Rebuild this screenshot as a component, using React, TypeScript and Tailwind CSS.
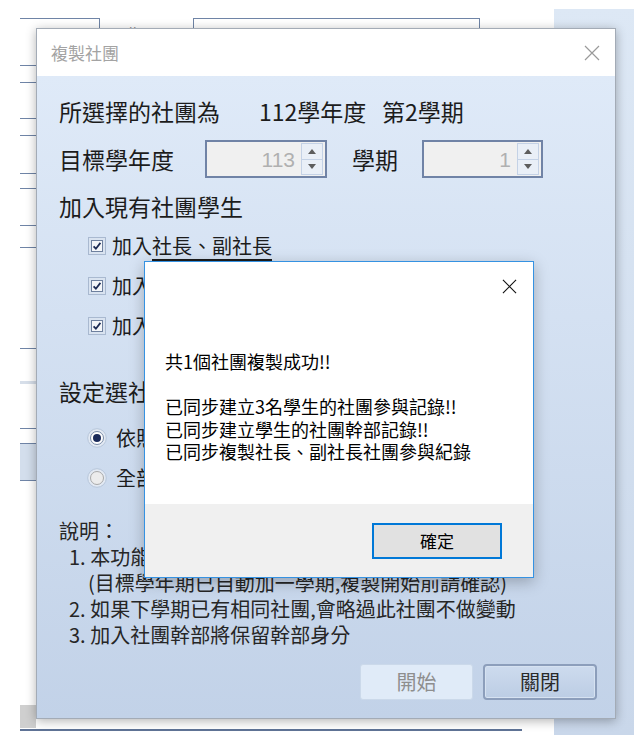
import React from "react";

const font = "font-['Noto_Sans_CJK_TC','Noto_Sans_CJK_SC',sans-serif]";

const CheckBox = () => (
  <svg width="18" height="18" viewBox="0 0 18 18">
    <rect x="0.5" y="0.5" width="17" height="17" fill="#d9e3f0" stroke="#a9b9d0" />
    <rect x="3.5" y="3.5" width="11" height="11" fill="#f5f7fa" stroke="#6e809e" />
    <path d="M5.6 9.3 L7.9 11.7 L12.4 5.9" fill="none" stroke="#1d2c55" strokeWidth="1.8" />
  </svg>
);

const Radio = ({ on }: { on?: boolean }) => (
  <svg width="20" height="20" viewBox="0 0 20 20">
    <circle cx="10" cy="10" r="9.3" fill="#e2e9f3" stroke="#b7c6da" />
    <circle cx="10" cy="10" r="6.5" fill={on ? "#ffffff" : "#ececec"} stroke={on ? "#7a8ca8" : "#a9a9a9"} />
    {on && <circle cx="10" cy="10" r="4" fill="#1b2b5a" />}
  </svg>
);

const CloseX = ({ color, size }: { color: string; size: number }) => (
  <svg width={size} height={size} viewBox="0 0 16 16">
    <path d="M1 1 L15 15 M15 1 L1 15" stroke={color} strokeWidth="1.2" fill="none" />
  </svg>
);

const Spin = ({ value, width }: { value: string; width: string }) => (
  <div className={`${width} h-[38px] flex items-center border-2 border-[#7083a6] bg-[#f0f0f0] pr-[2px]`}>
    <div className="flex-1 pr-[6px] text-right text-[21px] leading-none text-[#b0b0b0] font-['Liberation_Sans',sans-serif]">
      {value}
    </div>
    <div className="w-[22px] h-[32px] flex flex-col">
      <div className="flex-1 flex items-center justify-center border border-[#c4d2e6] bg-[#e9eff7]">
        <svg width="8" height="5" viewBox="0 0 8 5"><path d="M0 5 L4 0 L8 5 Z" fill="#5d5d5d" /></svg>
      </div>
      <div className="flex-1 flex items-center justify-center border border-t-0 border-[#c4d2e6] bg-[#e9eff7]">
        <svg width="8" height="5" viewBox="0 0 8 5"><path d="M0 0 L4 5 L8 0 Z" fill="#5d5d5d" /></svg>
      </div>
    </div>
  </div>
);

const Line = ({ mt, light }: { mt: string; light?: boolean }) => (
  <div className={`${mt} w-[16px] ${light ? "h-[3px] bg-[#d6dee9]" : "h-px bg-[#6f84a6]"}`} />
);

export default function App() {
  return (
    <div className={`relative w-[634px] h-[745px] overflow-hidden bg-white ${font}`}>
      {/* application behind the dialog */}
      <div className="flex h-full">
        <div className="w-[554px] flex flex-col">
          <div className="flex pt-[18px]">
            <div className="ml-[20px] w-[80px] h-[14px] border-t border-r border-[#6f84a6]" />
            <span className="ml-[28px] mt-[8px] text-[16px] leading-none text-[#8a8a8a]">期</span>
            <div className="ml-[49px] w-[287px] h-[14px] border-t border-l border-r border-[#6f84a6] pl-[8px] pt-[7px] text-[18px] leading-none text-[#333]">
              112
            </div>
          </div>
          <div className="ml-[20px] flex flex-col">
            <Line mt="mt-[23px]" />
            <Line mt="mt-[16px]" />
            <Line mt="mt-[35px]" />
            <Line mt="mt-[16px]" />
            <Line mt="mt-[37px]" />
            <Line mt="mt-[14px]" />
            <Line mt="mt-[36px]" />
            <Line mt="mt-[21px]" />
            <Line mt="mt-[100px]" />
            <Line mt="mt-[32px]" light />
            <Line mt="mt-[44px]" />
            <div className="mt-[14px] w-[16px] h-[38px] border-y border-[#6f84a6] bg-[#d3deec]" />
            <div className="mt-[224px] w-[16px] h-[23px] bg-[#cfcfcf]" />
            <div className="mt-[1px] w-[502px] h-[2px] bg-[#5f7396]" />
          </div>
        </div>
        <div className="mt-[9px] w-[80px] h-[726px] bg-linear-to-b from-[#dde8f5] to-[#c9d7ea]" />
      </div>

      {/* 複製社團 dialog */}
      <div className="absolute left-[36px] top-[28px] w-[580px] h-[691px] flex flex-col border border-[#a3abb6] shadow-[0_2px_10px_rgba(0,0,0,0.3)]">
        <div className="h-[47px] shrink-0 bg-white flex items-center justify-between pl-[14px] pr-[15px]">
          <span className="text-[17px] text-[#a3a3a3]">複製社團</span>
          <CloseX color="#9a9a9a" size={16} />
        </div>
        <div className="flex-1 flex flex-col bg-linear-to-b from-[#dfeaf8] to-[#c2d2e8] pl-[22px] pr-[18px] pt-[15px] text-[#1c1c1c]">
          <div className="h-[40px] flex items-center text-[23px]">
            <span className="w-[200px]">所選擇的社團為</span>
            <span className="w-[123px]">112學年度</span>
            <span>第2學期</span>
          </div>
          <div className="mt-[9px] flex items-center text-[23px]">
            <span className="w-[146px]">目標學年度</span>
            <Spin value="113" width="w-[122px]" />
            <span className="ml-[25px] w-[70px]">學期</span>
            <Spin value="1" width="w-[121px]" />
          </div>
          <div className="mt-[13px] h-[30px] flex items-center text-[23px]">加入現有社團學生</div>
          <div className="mt-[5px] flex flex-col pl-[29px] text-[20px]">
            <div className="h-[40px] flex items-center gap-[6px]">
              <CheckBox />
              <span>
                加入<span className="underline underline-offset-[5px] decoration-[1.5px]">社長、副社長</span>
              </span>
            </div>
            <div className="h-[40px] flex items-center gap-[6px]">
              <CheckBox />
              <span className="w-[32px] overflow-hidden whitespace-nowrap">加入社團一般學生</span>
            </div>
            <div className="h-[40px] flex items-center gap-[6px]">
              <CheckBox />
              <span className="w-[32px] overflow-hidden whitespace-nowrap">加入社團幹部</span>
            </div>
          </div>
          <div className="mt-[30px] h-[30px] flex items-center text-[23px]">
            <span className="w-[86px] overflow-hidden whitespace-nowrap">設定選社方式</span>
          </div>
          <div className="mt-[12px] flex flex-col pl-[28px] text-[20px]">
            <div className="h-[40px] flex items-center gap-[9px]">
              <Radio on />
              <span className="w-[28px] overflow-hidden whitespace-nowrap">依照原社團設定</span>
            </div>
            <div className="h-[40px] flex items-center gap-[9px]">
              <Radio />
              <span className="w-[28px] overflow-hidden whitespace-nowrap">全部開放選社</span>
            </div>
          </div>
          <div className="mt-[20px] flex flex-col items-start text-[20px] leading-[26px] text-[#262626]">
            <span>說明：</span>
            <span className="ml-[10px] w-[75px] overflow-hidden whitespace-nowrap">1. 本功能會複製所選社團至目標學年期</span>
            <span className="pl-[29px]">(目標學年期已自動加一學期,複製開始前請確認)</span>
            <span className="pl-[10px]">2. 如果下學期已有相同社團,會略過此社團不做變動</span>
            <span className="pl-[10px]">3. 加入社團幹部將保留幹部身分</span>
          </div>
          <div className="mt-[16px] flex justify-end gap-[10px]">
            <button className="w-[113px] h-[36px] rounded-[3px] border border-[#cbd9ea] bg-[#e0ebf8] text-[20px] text-[#8e8e8e]">
              開始
            </button>
            <button className="w-[114px] h-[36px] rounded-[4px] border-2 border-[#8c9ebb] bg-linear-to-b from-[#cddbee] to-[#bccde4] text-[20px] text-[#2a2a2a] shadow-[inset_0_0_0_1px_#d6e2f1]">
              關閉
            </button>
          </div>
        </div>
      </div>

      {/* message box */}
      <div className="absolute left-[144px] top-[261px] w-[390px] h-[317px] flex flex-col border border-[#3592e2] shadow-[0_4px_14px_rgba(0,0,0,0.25)]">
        <div className="h-[242px] bg-white flex flex-col">
          <div className="h-[46px] flex justify-end items-center pr-[16px] pt-[2px]">
            <CloseX color="#111111" size={15} />
          </div>
          <div className="pl-[20px] mt-[42px] text-[18px] leading-[22.5px] text-black">
            <div>共1個社團複製成功!!</div>
            <div className="h-[22.5px]" />
            <div>已同步建立3名學生的社團參與記錄!!</div>
            <div>已同步建立學生的社團幹部記錄!!</div>
            <div>已同步複製社長、副社長社團參與紀錄</div>
          </div>
        </div>
        <div className="flex-1 bg-[#f0f0f0] flex justify-end pr-[31px] pt-[19px]">
          <button className="w-[130px] h-[36px] border-2 border-[#0078d7] bg-[#e1e1e1] text-[17px] text-black">
            確定
          </button>
        </div>
      </div>
    </div>
  );
}
